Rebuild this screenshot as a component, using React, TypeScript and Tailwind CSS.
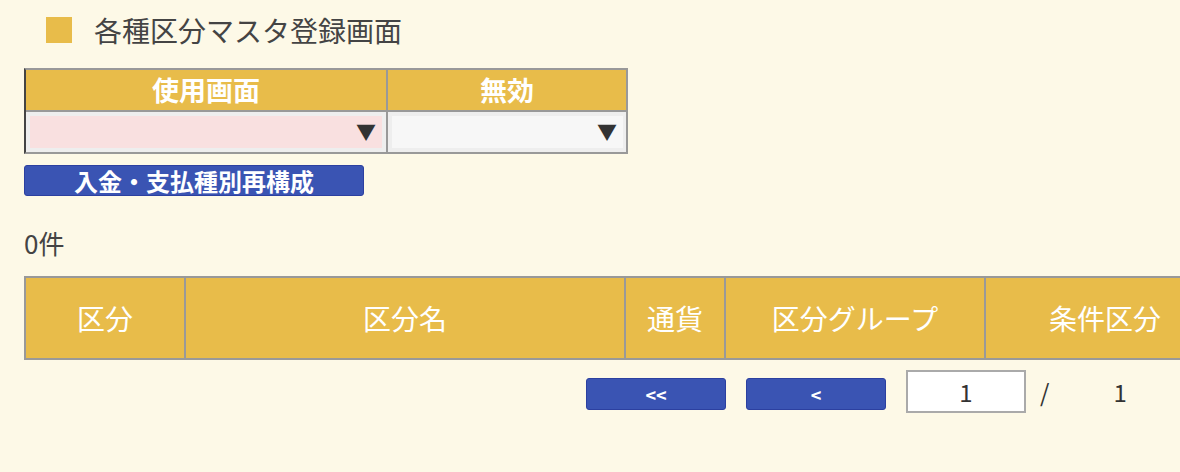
import React from "react";

const font = { fontFamily: '"Noto Sans CJK JP", "Noto Sans", sans-serif' };

export default function App() {
  return (
    <div className="w-[1180px] h-[472px] overflow-hidden bg-[#fdf9e7] text-[#333]" style={font}>
      <div className="pl-[24px] w-[1400px]">
        {/* Title */}
        <div className="flex items-center h-[28px] mt-[16px] pl-[22px]">
          <div className="w-[26px] h-[26px] bg-[#e8bc4a]" />
          <div className="ml-[22px] text-[28px] leading-[28px] text-[#444]">各種区分マスタ登録画面</div>
        </div>

        {/* Filter table */}
        <div className="mt-[24px] w-[604px] border-2 border-[#999] border-l-[#444]">
          <div className="flex h-[40px] bg-[#e8bc4a] text-white font-bold text-[27px] leading-[40px]">
            <div className="w-[362px] border-r-2 border-[#999] text-center">使用画面</div>
            <div className="flex-1 text-center">無効</div>
          </div>
          <div className="flex h-[42px] border-t-2 border-[#999] bg-[#eeeeee]">
            <div className="w-[362px] border-r-2 border-[#999] p-[4px]">
              <div className="h-[32px] bg-[#f9e0e0] flex items-center justify-end pr-[6px]">
                <span className="text-[20px] leading-none text-[#333]">▼</span>
              </div>
            </div>
            <div className="flex-1 pl-[4px] pr-[3px] py-[4px]">
              <div className="h-[32px] bg-[#f7f7f7] flex items-center justify-end pr-[6px]">
                <span className="text-[20px] leading-none text-[#333]">▼</span>
              </div>
            </div>
          </div>
        </div>

        {/* Rebuild button */}
        <div className="mt-[11px] w-[340px] h-[31px] rounded-[3px] bg-[#3a54b3] border border-[#2c40a0] text-white font-bold text-[24px] leading-[29px] text-center">
          入金・支払種別再構成
        </div>

        {/* Count */}
        <div className="mt-[32px] text-[26px] leading-[30px] text-[#444]">0件</div>

        {/* List table header */}
        <div className="mt-[18px] flex h-[84px] border-y-2 border-l-2 border-[#999] bg-[#e8bc4a] text-white text-[28px]">
          <div className="w-[160px] border-r-2 border-[#999] flex items-center justify-center">区分</div>
          <div className="w-[440px] border-r-2 border-[#999] flex items-center justify-center">区分名</div>
          <div className="w-[100px] border-r-2 border-[#999] flex items-center justify-center">通貨</div>
          <div className="w-[260px] border-r-2 border-[#999] flex items-center justify-center">区分グループ</div>
          <div className="w-[240px] border-r-2 border-[#999] flex items-center justify-center">条件区分</div>
        </div>

        {/* Pagination */}
        <div className="flex items-start ml-[562px]">
          <div className="mt-[18px] w-[140px] h-[32px] rounded-[3px] bg-[#3a54b3] border border-[#2c40a0] text-white font-bold text-[18px] leading-[30px] text-center">
            &lt;&lt;
          </div>
          <div className="mt-[18px] ml-[20px] w-[140px] h-[32px] rounded-[3px] bg-[#3a54b3] border border-[#2c40a0] text-white font-bold text-[18px] leading-[30px] text-center">
            &lt;
          </div>
          <div className="mt-[10px] ml-[20px] w-[120px] h-[43px] border-2 border-[#aaa] bg-white text-[24px] leading-[39px] text-center text-[#333]">
            1
          </div>
          <div className="mt-[10px] ml-[14px] text-[24px] leading-[43px] text-[#333]">/</div>
          <div className="mt-[10px] ml-[64px] text-[24px] leading-[43px] text-[#333]">1</div>
        </div>
      </div>
    </div>
  );
}
